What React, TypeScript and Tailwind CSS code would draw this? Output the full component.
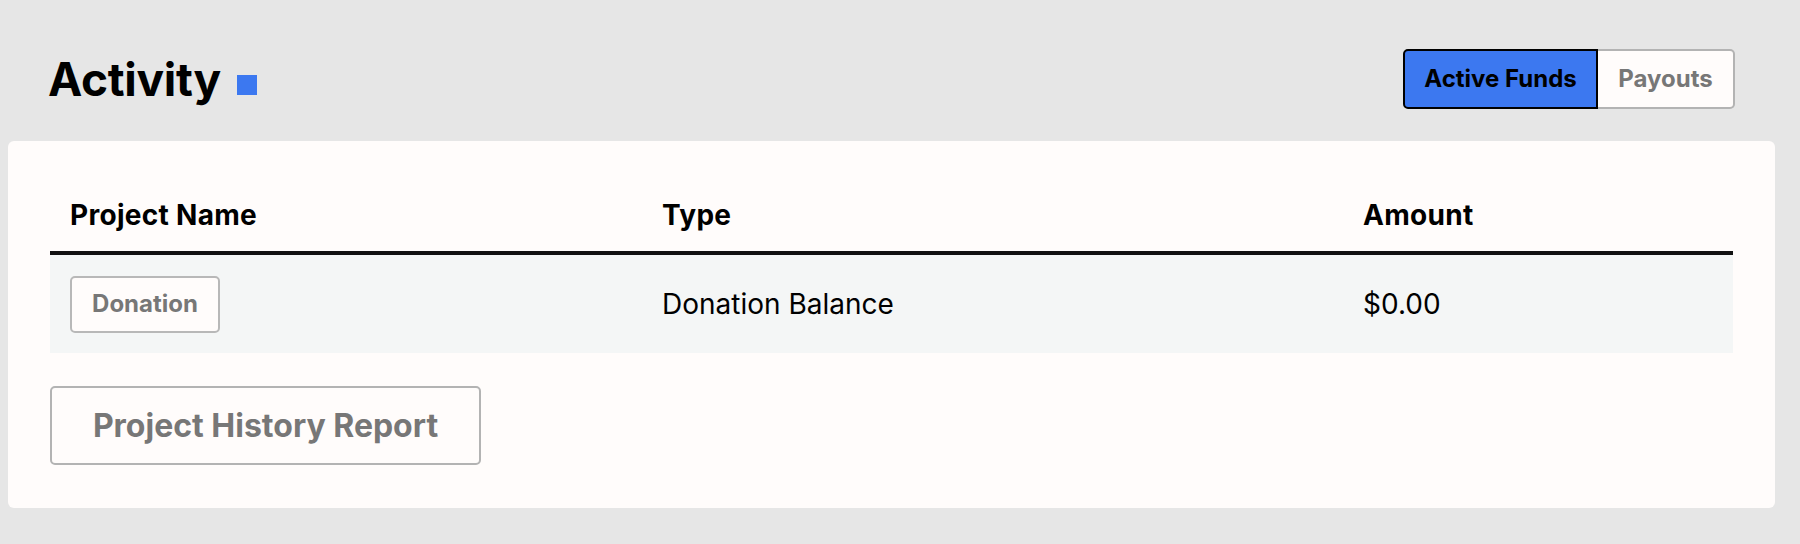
import React from "react";

const rows = [
  { project: "Donation", type: "Donation Balance", amount: "$0.00" },
];

export default function App() {
  const [tab, setTab] = React.useState<"funds" | "payouts">("funds");

  return (
    <div className="min-h-screen bg-[#e6e6e6] pt-[49px] font-[Inter,sans-serif] text-black">
      <div className="mx-2 w-[1767px]">
        <div className="flex h-[60px] items-center justify-between px-10">
          <div className="flex items-end gap-4">
            <h1 className="text-[46px] leading-none font-bold tracking-[-0.3px]">Activity</h1>
            <span className="mb-[7px] h-5 w-5 bg-[#3c78f0]" />
          </div>
          <div className="flex h-[60px]">
            <button
              onClick={() => setTab("funds")}
              className="w-[195px] rounded-l-[5px] border-2 border-black bg-[#3c78f0] text-[24px] font-bold text-black"
            >
              Active Funds
            </button>
            <button
              onClick={() => setTab("payouts")}
              className="w-[137px] rounded-r-[5px] border-2 border-l-0 border-[#b3b3b3] bg-[#fffcfb] text-[24px] font-bold text-[#777]"
            >
              Payouts
            </button>
          </div>
        </div>

        <div className="mt-[32px] h-[367px] rounded-[6px] bg-[#fffcfb] px-[42px]">
          {tab === "funds" && (
            <>
              <div className="flex h-[114px] items-end border-b-4 border-[#111] pb-[15px] text-[28px] font-bold tracking-[0.3px]">
                <div className="w-[592px] pl-5">Project Name</div>
                <div className="w-[701px] pl-5">Type</div>
                <div className="flex-1 pl-5">Amount</div>
              </div>
              {rows.map((r) => (
                <div key={r.project} className="flex h-[98px] items-center bg-[#f4f6f6] text-[28px]">
                  <div className="w-[592px] pl-5">
                    <span className="inline-flex h-[57px] w-[150px] items-center justify-center rounded-[5px] border-2 border-[#b8b8b8] bg-[#fffcfb] text-[24px] font-bold text-[#777]">
                      {r.project}
                    </span>
                  </div>
                  <div className="w-[701px] pl-5">{r.type}</div>
                  <div className="flex-1 pl-5">{r.amount}</div>
                </div>
              ))}
              <button className="mt-[33px] h-[79px] w-[431px] rounded-[5px] border-2 border-[#b3b3b3] text-[32px] font-bold text-[#777]">
                Project History Report
              </button>
            </>
          )}
        </div>
      </div>
    </div>
  );
}
